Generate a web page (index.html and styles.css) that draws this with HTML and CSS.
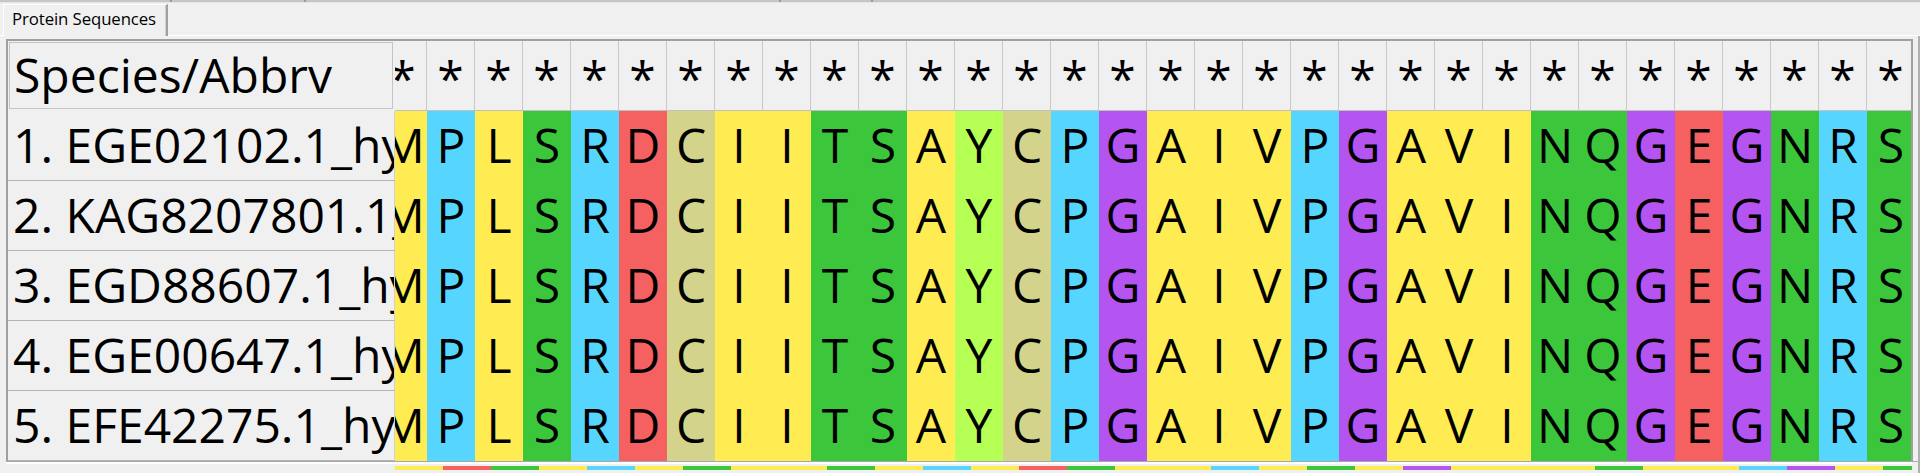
FILE: index.html
```html
<!DOCTYPE html>
<html>
<head>
<meta charset="utf-8">
<link rel="stylesheet" href="styles.css">
</head>
<body>
<div class="app">
  <div class="topbar">
    <span class="tb tb1"></span><span class="tb tb2"></span><span class="tb tb3"></span><span class="tb tb4"></span><span class="tb tb5"></span>
  </div>
  <div class="tabstrip">
    <div class="tab">Protein Sequences</div>
  </div>
  <div class="pane">
    <div class="frame">
      <div class="labels">
        <div class="lab head"><span>Species/Abbrv</span></div>
        <div class="lab"><span>1. EGE02102.1_hy</span></div>
        <div class="lab"><span>2. KAG8207801.1_</span></div>
        <div class="lab"><span>3. EGD88607.1_hy</span></div>
        <div class="lab"><span>4. EGE00647.1_hy</span></div>
        <div class="lab"><span>5. EFE42275.1_hy</span></div>
      </div>
      <div class="seqs">
        <div class="seqrow head">
          <b>*</b><b>*</b><b>*</b><b>*</b><b>*</b><b>*</b><b>*</b><b>*</b><b>*</b><b>*</b><b>*</b><b>*</b><b>*</b><b>*</b><b>*</b><b>*</b><b>*</b><b>*</b><b>*</b><b>*</b><b>*</b><b>*</b><b>*</b><b>*</b><b>*</b><b>*</b><b>*</b><b>*</b><b>*</b><b>*</b><b>*</b><b>*</b>
        </div>
        <div class="seqrow">
          <b class="y">M</b><b class="bl">P</b><b class="y">L</b><b class="g">S</b><b class="bl">R</b><b class="r">D</b><b class="k">C</b><b class="y">I</b><b class="y">I</b><b class="g">T</b><b class="g">S</b><b class="y">A</b><b class="l">Y</b><b class="k">C</b><b class="bl">P</b><b class="p">G</b><b class="y">A</b><b class="y">I</b><b class="y">V</b><b class="bl">P</b><b class="p">G</b><b class="y">A</b><b class="y">V</b><b class="y">I</b><b class="g">N</b><b class="g">Q</b><b class="p">G</b><b class="r">E</b><b class="p">G</b><b class="g">N</b><b class="bl">R</b><b class="g">S</b>
        </div>
        <div class="seqrow">
          <b class="y">M</b><b class="bl">P</b><b class="y">L</b><b class="g">S</b><b class="bl">R</b><b class="r">D</b><b class="k">C</b><b class="y">I</b><b class="y">I</b><b class="g">T</b><b class="g">S</b><b class="y">A</b><b class="l">Y</b><b class="k">C</b><b class="bl">P</b><b class="p">G</b><b class="y">A</b><b class="y">I</b><b class="y">V</b><b class="bl">P</b><b class="p">G</b><b class="y">A</b><b class="y">V</b><b class="y">I</b><b class="g">N</b><b class="g">Q</b><b class="p">G</b><b class="r">E</b><b class="p">G</b><b class="g">N</b><b class="bl">R</b><b class="g">S</b>
        </div>
        <div class="seqrow">
          <b class="y">M</b><b class="bl">P</b><b class="y">L</b><b class="g">S</b><b class="bl">R</b><b class="r">D</b><b class="k">C</b><b class="y">I</b><b class="y">I</b><b class="g">T</b><b class="g">S</b><b class="y">A</b><b class="l">Y</b><b class="k">C</b><b class="bl">P</b><b class="p">G</b><b class="y">A</b><b class="y">I</b><b class="y">V</b><b class="bl">P</b><b class="p">G</b><b class="y">A</b><b class="y">V</b><b class="y">I</b><b class="g">N</b><b class="g">Q</b><b class="p">G</b><b class="r">E</b><b class="p">G</b><b class="g">N</b><b class="bl">R</b><b class="g">S</b>
        </div>
        <div class="seqrow">
          <b class="y">M</b><b class="bl">P</b><b class="y">L</b><b class="g">S</b><b class="bl">R</b><b class="r">D</b><b class="k">C</b><b class="y">I</b><b class="y">I</b><b class="g">T</b><b class="g">S</b><b class="y">A</b><b class="l">Y</b><b class="k">C</b><b class="bl">P</b><b class="p">G</b><b class="y">A</b><b class="y">I</b><b class="y">V</b><b class="bl">P</b><b class="p">G</b><b class="y">A</b><b class="y">V</b><b class="y">I</b><b class="g">N</b><b class="g">Q</b><b class="p">G</b><b class="r">E</b><b class="p">G</b><b class="g">N</b><b class="bl">R</b><b class="g">S</b>
        </div>
        <div class="seqrow">
          <b class="y">M</b><b class="bl">P</b><b class="y">L</b><b class="g">S</b><b class="bl">R</b><b class="r">D</b><b class="k">C</b><b class="y">I</b><b class="y">I</b><b class="g">T</b><b class="g">S</b><b class="y">A</b><b class="l">Y</b><b class="k">C</b><b class="bl">P</b><b class="p">G</b><b class="y">A</b><b class="y">I</b><b class="y">V</b><b class="bl">P</b><b class="p">G</b><b class="y">A</b><b class="y">V</b><b class="y">I</b><b class="g">N</b><b class="g">Q</b><b class="p">G</b><b class="r">E</b><b class="p">G</b><b class="g">N</b><b class="bl">R</b><b class="g">S</b>
        </div>
      </div>
    </div>
    <div class="under">
      <div class="under-lab"></div>
      <div class="strip">
        <i class="y"></i><i class="r"></i><i class="g"></i><i class="y"></i><i class="bl"></i><i class="y"></i><i class="g"></i><i class="y"></i><i class="y"></i><i class="g"></i><i class="y"></i><i class="bl"></i><i class="y"></i><i class="r"></i><i class="g"></i><i class="y"></i><i class="y"></i><i class="bl"></i><i class="y"></i><i class="g"></i><i class="y"></i><i class="p"></i><i class="y"></i><i class="y"></i><i class="y"></i><i class="g"></i><i class="y"></i><i class="y"></i><i class="bl"></i><i class="p"></i><i class="y"></i><i class="g"></i>
      </div>
    </div>
  </div>
</div>
</body>
</html>
```

FILE: styles.css
```css
* { box-sizing: border-box; }
html, body { margin: 0; padding: 0; }
body {
  width: 1920px;
  height: 473px;
  overflow: hidden;
  background: #f0f0f0;
  font-family: "Open Sans", "Noto Sans", sans-serif;
  color: #000;
}
.app {
  width: 1920px;
  height: 473px;
  overflow: hidden;
  display: flex;
  flex-direction: column;
}
.topbar {
  height: 3px;
  flex: none;
  display: flex;
  background: #c6c6c6;
  border-bottom: 1px solid #e6e6e6;
}
.tb { height: 100%; border-right: 2px solid #9a9a9a; }
.tb1 { width: 172px; }
.tb2 { width: 134px; }
.tb3 { width: 475px; }
.tb4 { width: 92px; }
.tb5 { flex: 1; border-right: none; }

.tabstrip {
  height: 33px;
  flex: none;
  display: flex;
  align-items: flex-end;
  padding-left: 3px;
  box-shadow: inset 0 -1px #ffffff;
}
.tab {
  width: 165px;
  height: 32px;
  border-top: 1px solid #ffffff;
  border-left: 1px solid #ffffff;
  border-right: 2px solid #a0a0a0;
  box-shadow: inset -1px 0 #d0d0d0;
  background: #f0f0f0;
  font-size: 16.8px;
  line-height: 28px;
  padding-left: 8px;
  white-space: nowrap;
  letter-spacing: -0.1px;
}
.pane {
  flex: 1;
  padding: 3px 0 0 6px;
  border-right: 2px solid #b0b0b0;
  display: flex;
  flex-direction: column;
}
.frame {
  width: 1907px;
  display: flex;
  border-top: 2px solid #a0a0a0;
  border-left: 2px solid #a0a0a0;
  border-right: 2px solid #a0a0a0;
  flex: none;
}
.labels {
  width: 387px;
  flex: none;
  display: flex;
  flex-direction: column;
}
.lab {
  height: 70px;
  border-bottom: 1px solid #b4b4b4;
  border-right: 1px solid #d0d0d0;
  display: flex;
  align-items: center;
  overflow: hidden;
  white-space: nowrap;
  font-size: 48px;
  line-height: 1;
  padding-left: 5px;
  padding-bottom: 2px;
}
.lab span { display: block; }
.lab.head {
  border: 1px solid #c4c4c4;
  margin: 1px 2px 2px 1px;
  height: 67px;
  padding-left: 4px;
}
.seqs {
  width: 1516px;
  flex: none;
  overflow: hidden;
}
.seqrow {
  display: flex;
  margin-left: -16px;
  height: 70px;
}
.seqrow b {
  flex: none;
  width: 48px;
  height: 70px;
  display: flex;
  align-items: center;
  justify-content: center;
  font-weight: normal;
  font-size: 48px;
  line-height: 1;
  padding-bottom: 2px;
}
.seqrow.head b {
  border-right: 1px solid #c8c8c8;
  border-bottom: 1px solid #c0c0c0;
  align-items: flex-start;
  padding-top: 13px;
}
.y { background: #ffec52; }
.bl { background: #56d6ff; }
.g { background: #3cc63c; }
.r { background: #f56161; }
.k { background: #d3d38b; }
.p { background: #b455f2; }
.l { background: #b6ff55; }

.under {
  display: flex;
  flex: none;
  height: 10px;
  border-top: 1px solid #a8a8a8;
}
.under-lab { width: 389px; flex: none; border-top: 2px solid #ffffff; }
.strip {
  width: 1517px;
  flex: none;
  display: flex;
  overflow: hidden;
  border-top: 2px solid #ffffff;
  padding-top: 1px;
}
.strip i {
  flex: none;
  width: 48px;
  height: 4px;
  margin-top: 1px;
}
```
